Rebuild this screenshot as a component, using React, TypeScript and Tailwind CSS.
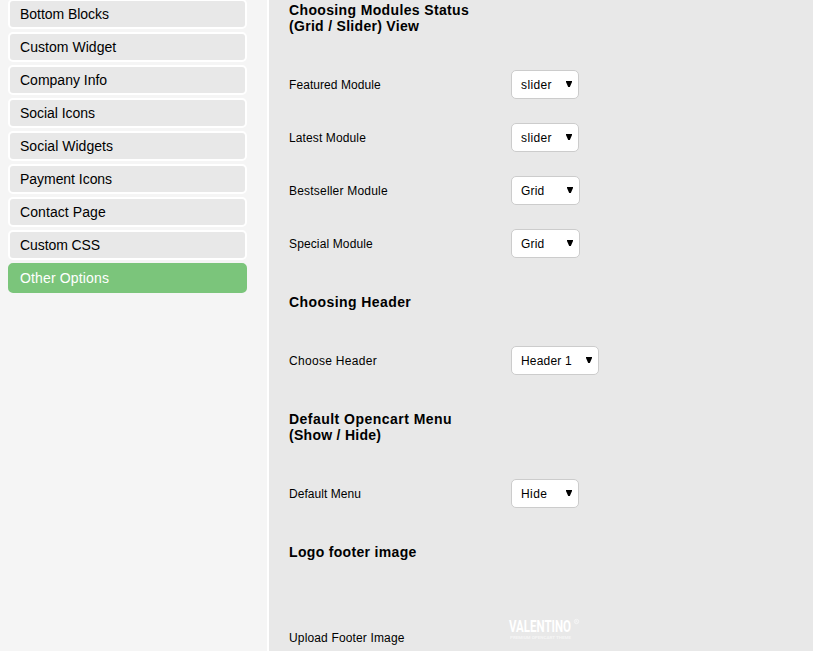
const navItems = [
  { label: "Bottom Blocks", tracking: "tracking-[-0.04px]" },
  { label: "Custom Widget", tracking: "tracking-[0.04px]" },
  { label: "Company Info", tracking: "tracking-normal" },
  { label: "Social Icons", tracking: "tracking-[-0.04px]" },
  { label: "Social Widgets", tracking: "tracking-[0.03px]" },
  { label: "Payment Icons", tracking: "tracking-[-0.04px]" },
  { label: "Contact Page", tracking: "tracking-[0.08px]" },
  { label: "Custom CSS", tracking: "tracking-[-0.08px]" },
  { label: "Other Options", tracking: "tracking-[0.15px]", active: true },
];

type Line = { text: string; tracking: string };

function Heading({ lines, className }: { lines: Line[]; className: string }) {
  return (
    <h2 className={`flex flex-col justify-center text-[14px] leading-4 font-bold ${className}`}>
      {lines.map((line) => (
        <span key={line.text} className={line.tracking}>
          {line.text}
        </span>
      ))}
    </h2>
  );
}

type RowProps = { label: string; tracking: string; value: string; width: string; valueTracking: string };

function Row({ label, tracking, value, width, valueTracking }: RowProps) {
  return (
    <div className="flex h-[53px] items-center">
      <span className={`w-[222px] text-[12px] leading-4 ${tracking}`}>{label}</span>
      <button
        className={`flex h-[29px] items-center justify-between rounded-[5px] border border-[#cccccc] bg-white pr-[6px] pl-[9px] text-[12px] ${width}`}
      >
        <span className={valueTracking}>{value}</span>
        <svg className="mb-px h-[6px] w-[6px]" viewBox="0 0 6 6">
          <path d="M0 0H6V1L3.8 6H2.2L0 1Z" fill="#000" />
        </svg>
      </button>
    </div>
  );
}

function FooterLogo() {
  return (
    <svg
      className="-ml-[3px] h-[32px] w-[80px] overflow-visible"
      viewBox="0 0 80 32"
      fill="#fff"
      fontFamily="Roboto, sans-serif"
    >
      <text x="1" y="17" fontSize="17" fontWeight="700" textLength="62" lengthAdjust="spacingAndGlyphs">
        VALENTINO
      </text>
      <text x="2" y="23.5" fontSize="4" fontWeight="700" textLength="61" lengthAdjust="spacingAndGlyphs" opacity=".6">
        PREMIUM OPENCART THEME
      </text>
      <circle cx="68.5" cy="6.5" r="2.2" fill="none" stroke="#fff" strokeWidth=".7" opacity=".7" />
      <path d="M67.8 7.8V5.3H68.8Q69.5 5.9 68.8 6.6H67.8M68.7 6.6L69.4 7.8" fill="none" stroke="#fff" strokeWidth=".5" opacity=".7" />
    </svg>
  );
}

export default function App() {
  return (
    <div className="flex h-[651px] w-full overflow-hidden bg-[#f5f5f5] font-['Liberation_Sans',Arial,sans-serif] text-black">
      <nav className="-mt-px flex w-[267px] shrink-0 flex-col gap-[3px] pl-2">
        {navItems.map((item) => (
          <a
            key={item.label}
            className={`flex h-[30px] w-[239px] shrink-0 items-center rounded-[5px] border-2 pl-[10px] text-[14px] leading-4 ${item.tracking} ${
              item.active ? "border-[#7bc57b] bg-[#7bc57b] text-white" : "border-white bg-[#e8e8e8]"
            }`}
          >
            {item.label}
          </a>
        ))}
      </nav>
      <main className="flex-1 border-l-2 border-white bg-[#e8e8e8] pl-5">
        <Heading
          className="h-[58px] pb-[22px]"
          lines={[
            { text: "Choosing Modules Status", tracking: "tracking-[0.36px]" },
            { text: "(Grid / Slider) View", tracking: "tracking-[0.3px]" },
          ]}
        />
        <Row label="Featured Module" tracking="tracking-[0.07px]" value="slider" valueTracking="tracking-[0.38px]" width="w-[68px]" />
        <Row label="Latest Module" tracking="tracking-[0.12px]" value="slider" valueTracking="tracking-[0.38px]" width="w-[68px]" />
        <Row label="Bestseller Module" tracking="tracking-[0.2px]" value="Grid" valueTracking="tracking-[0.2px]" width="w-[69px]" />
        <Row label="Special Module" tracking="tracking-[0.13px]" value="Grid" valueTracking="tracking-[0.2px]" width="w-[69px]" />
        <Heading className="h-16" lines={[{ text: "Choosing Header", tracking: "tracking-[0.42px]" }]} />
        <Row label="Choose Header" tracking="tracking-[0.3px]" value="Header 1" valueTracking="tracking-[0.2px]" width="w-[88px]" />
        <Heading
          className="h-20"
          lines={[
            { text: "Default Opencart Menu", tracking: "tracking-[0.47px]" },
            { text: "(Show / Hide)", tracking: "tracking-[0.28px]" },
          ]}
        />
        <Row label="Default Menu" tracking="tracking-[0.04px]" value="Hide" valueTracking="tracking-[0.4px]" width="w-[68px]" />
        <Heading className="h-16" lines={[{ text: "Logo footer image", tracking: "tracking-[0.33px]" }]} />
        <div className="flex items-start pt-[31px]">
          <span className="mt-[15px] w-[222px] text-[12px] leading-4 tracking-[0.15px]">Upload Footer Image</span>
          <FooterLogo />
        </div>
      </main>
    </div>
  );
}
